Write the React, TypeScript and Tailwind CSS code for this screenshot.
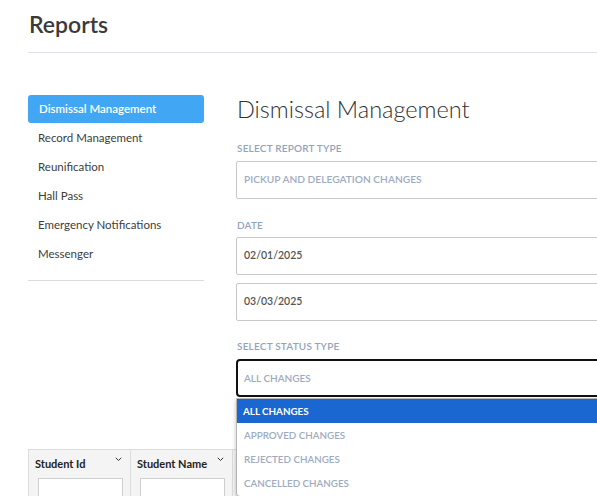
import React from "react";

const font = { fontFamily: "Lato, 'Open Sans', sans-serif" };

function Chevron() {
  return (
    <svg width="7" height="5" viewBox="0 0 7 5" className="absolute right-[8px] top-[7px]">
      <path d="M0.8 0.8 L3.5 3.5 L6.2 0.8" fill="none" stroke="#333" strokeWidth="1" />
    </svg>
  );
}

const label = "leading-[12px] text-[10px] font-semibold tracking-[0.2px] text-[#93a3bb] pl-[1px]";
const box = "h-[38px] border border-[#c9c9c9] rounded-[2px] flex items-center pl-[7px]";

export default function App() {
  const items = [
    "Dismissal Management",
    "Record Management",
    "Reunification",
    "Hall Pass",
    "Emergency Notifications",
    "Messenger",
  ];
  const options = ["ALL CHANGES", "APPROVED CHANGES", "REJECTED CHANGES", "CANCELLED CHANGES"];
  return (
    <div className="w-[597px] h-[496px] overflow-hidden bg-white relative" style={font}>
      <div className="ml-[28px]">
        <div className="pt-[9px] h-[52px] text-[23px] font-semibold text-[#3a3a3a] leading-[30px] pl-[1px]">Reports</div>
        <div className="h-px bg-[#dfe1e8] w-[600px]" />
      </div>
      <div className="flex ml-[28px] mt-[42px]">
        <div className="w-[176px] shrink-0">
          <div className="flex flex-col">
            {items.map((t, i) => (
              <div
                key={t}
                className={
                  i === 0
                    ? "h-[28px] flex items-center pl-[11px] bg-[#41a7f5] rounded-[3px] text-white text-[11.5px] font-semibold"
                    : "h-[29px] flex items-center pl-[10px] text-[#3d3d3d] text-[11.5px]"
                }
              >
                {t}
              </div>
            ))}
          </div>
          <div className="h-px bg-[#dcdcdc] mt-[12px]" />
        </div>
        <div className="ml-[32px] w-[420px] shrink-0 relative">
          <div className="text-[23.5px] font-light text-[#2f3136] leading-[28px] pl-[1px]">Dismissal Management</div>
          <div className={"mt-[19px] " + label}>SELECT REPORT TYPE</div>
          <div className={"mt-[7px] text-[10.2px] font-semibold text-[#9eabbf] " + box}>
            PICKUP AND DELEGATION CHANGES
          </div>
          <div className={"mt-[20px] " + label}>DATE</div>
          <div className={"mt-[6px] text-[10.5px] font-semibold text-[#555] " + box}>02/01/2025</div>
          <div className={"mt-[8px] text-[10.5px] font-semibold text-[#555] " + box}>03/03/2025</div>
          <div className={"mt-[19px] " + label}>SELECT STATUS TYPE</div>
          <div className="mt-[7px] h-[38px] border-2 border-[#111] rounded-[4px] flex items-center pl-[6px] text-[10px] font-semibold text-[#9eabbf]">
            ALL CHANGES
          </div>
          <div className="absolute left-0 top-[303px] w-[420px] z-10 bg-white border border-[#b5b5b5] rounded-b-[4px] shadow-[0_2px_4px_rgba(0,0,0,0.25)] pb-[1px]">
            {options.map((o, i) => (
              <div
                key={o}
                className={
                  i === 0
                    ? "h-[24px] flex items-center pl-[6px] bg-[#1a67d2] text-white text-[9.8px] font-bold"
                    : "h-[24px] flex items-center pl-[7px] text-[#9eabbf] text-[9.8px] font-semibold"
                }
              >
                {o}
              </div>
            ))}
          </div>
        </div>
      </div>
      <div className="ml-[28px] mt-[52px] flex border-t border-l border-[#dcdcdc]">
        {["Student Id", "Student Name", ""].map((h, i) => (
          <div key={i} className="w-[102px] h-[60px] bg-[#f4f4f4] border-r border-[#dcdcdc] relative px-[6px] pt-[7px]">
            <div className="text-[11px] font-bold text-[#222] leading-[14px] h-[14px]">{h}</div>
            <Chevron />
            <div className="mt-[7px] ml-[3px] w-[85px] h-[24px] bg-white border border-[#cfcfcf]" />
          </div>
        ))}
      </div>
    </div>
  );
}
